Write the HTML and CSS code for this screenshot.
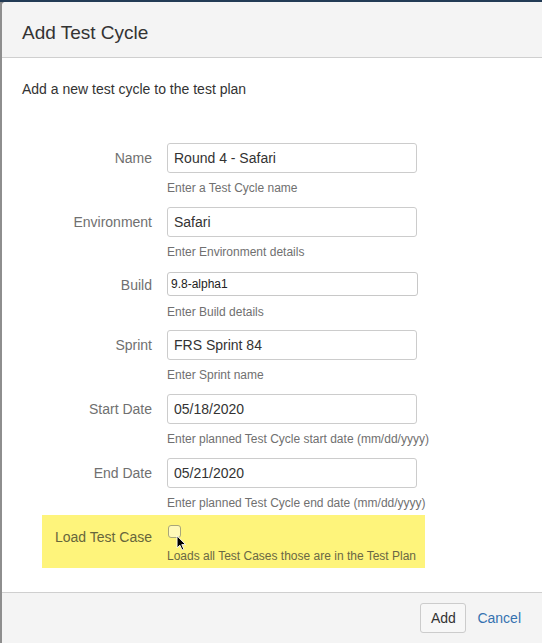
FILE: index.html
```html
<!DOCTYPE html>
<html>
<head>
<meta charset="utf-8">
<link rel="stylesheet" href="styles.css">
</head>
<body>
<div class="dialog">
  <header class="dlg-header"><h2 class="title">Add Test Cycle</h2></header>
  <div class="dlg-body">
    <p class="intro">Add a new test cycle to the test plan</p>
    <div class="form">
      <div class="row">
        <label class="lbl">Name</label>
        <div class="field"><input class="text" value="Round 4 - Safari"><div class="help">Enter a Test Cycle name</div></div>
      </div>
      <div class="row">
        <label class="lbl">Environment</label>
        <div class="field"><input class="text" value="Safari"><div class="help">Enter Environment details</div></div>
      </div>
      <div class="row row-small">
        <label class="lbl">Build</label>
        <div class="field"><input class="text small" value="9.8-alpha1"><div class="help">Enter Build details</div></div>
      </div>
      <div class="row">
        <label class="lbl">Sprint</label>
        <div class="field"><input class="text" value="FRS Sprint 84"><div class="help">Enter Sprint name</div></div>
      </div>
      <div class="row">
        <label class="lbl">Start Date</label>
        <div class="field"><input class="text" value="05/18/2020"><div class="help">Enter planned Test Cycle start date (mm/dd/yyyy)</div></div>
      </div>
      <div class="row">
        <label class="lbl">End Date</label>
        <div class="field"><input class="text" value="05/21/2020"><div class="help">Enter planned Test Cycle end date (mm/dd/yyyy)</div></div>
      </div>
      <div class="row row-hl">
        <label class="lbl lbl-hl">Load Test Case</label>
        <div class="field">
          <span class="checkbox"></span>
          <div class="help help-hl">Loads all Test Cases those are in the Test Plan</div>
        </div>
        <svg class="cursor" width="11" height="16" viewBox="0 0 12 18"><path d="M1 1 L1 14.5 L4.2 11.5 L6.6 16.8 L8.6 15.9 L6.3 10.8 L10.6 10.8 Z" fill="#000" stroke="#fff" stroke-width="1" stroke-linejoin="round"/></svg>
      </div>
    </div>
  </div>
  <footer class="dlg-footer">
    <button class="btn">Add</button>
    <a class="link">Cancel</a>
  </footer>
</div>
</body>
</html>
```
FILE: styles.css
```css
html, body { margin: 0; padding: 0; }
body {
  width: 542px;
  height: 643px;
  overflow: hidden;
  background: linear-gradient(to bottom, #223b55 0, #223b55 2px, #8e8e8e 2px);
  font-family: "Liberation Sans", Arial, sans-serif;
  color: #333;
}
.dialog {
  margin: 2px 0 0 2px;
  width: 540px;
  height: 700px;
  background: #fff;
  border-top-left-radius: 4px;
  overflow: hidden;
}
.dlg-header {
  height: 56px;
  box-sizing: border-box;
  padding: 19px 20px 0;
  background: #f4f4f4;
  border-bottom: 1px solid #cfcfcf;
}
.title {
  margin: 0;
  font-size: 19px;
  font-weight: normal;
  line-height: 24px;
  color: #333;
}
.dlg-body {
  padding: 21px 20px 24px;
}
.intro {
  margin: 0;
  font-size: 14px;
  line-height: 20px;
  color: #333;
}
.form {
  margin-top: 44px;
  display: flex;
  flex-direction: column;
}
.row {
  display: grid;
  grid-template-columns: 130px 250px;
  column-gap: 15px;
  margin-bottom: 11px;
}
.lbl {
  text-align: right;
  font-size: 14px;
  line-height: 30px;
  color: #707070;
}
.field { display: flex; flex-direction: column; align-items: flex-start; }
.text {
  box-sizing: border-box;
  width: 250px;
  height: 30px;
  margin: 0;
  padding: 0 6px;
  border: 1px solid #cccccc;
  border-radius: 3px;
  font-family: "Liberation Sans", Arial, sans-serif;
  font-size: 14px;
  color: #333;
  background: #fff;
  outline: none;
}
.text.small {
  width: 251px;
  height: 24px;
  margin: 1px 0;
  padding: 0 3px;
  font-size: 12px;
  color: #222;
  border-color: #c8c8c8;
}
.row-small { margin-bottom: 10px; }
.row-small .lbl { line-height: 29px; }
.help {
  margin-top: 7px;
  font-size: 12px;
  line-height: 16px;
  color: #707070;
  white-space: nowrap;
}
.row-hl {
  position: relative;
  margin: -7px 0 0 20px;
  width: 383px;
  padding: 10px 0 4px;
  background: #fef47b;
  grid-template-columns: 110px 250px;
}
.lbl-hl {
  line-height: 25px;
  color: #67663b;
}
.checkbox {
  display: block;
  box-sizing: border-box;
  width: 13px;
  height: 13px;
  margin-left: 1px;
  border: 1px solid #a8a67a;
  border-radius: 3px;
  background: #fff9b8;
}
.help-hl {
  margin-top: 10px;
  color: #6a6844;
}
.cursor {
  position: absolute;
  left: 134px;
  top: 20px;
}
.dlg-footer {
  border-top: 1px solid #cfcfcf;
  background: #f4f4f4;
  height: 60px;
  display: flex;
  justify-content: flex-end;
  align-items: flex-start;
  gap: 11px;
  padding: 10px 21px 0 0;
}
.btn {
  box-sizing: border-box;
  width: 46px;
  height: 30px;
  margin: 0;
  padding: 0;
  border: 1px solid #cccccc;
  border-radius: 3px;
  background: #f7f7f7;
  font-family: "Liberation Sans", Arial, sans-serif;
  font-size: 14px;
  color: #333;
}
.link {
  font-size: 14px;
  line-height: 30px;
  color: #3572b0;
  text-decoration: none;
}
```
